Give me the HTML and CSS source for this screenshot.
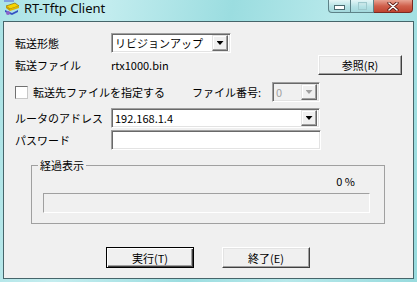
FILE: index.html
```html
<!DOCTYPE html>
<html lang="ja">
<head>
  <meta charset="UTF-8">
  <title>RT-Tftp Client</title>
  <link rel="stylesheet" href="styles.css">
</head>
<body>
  <div class="window">
    <div class="titlebar">
      <svg class="app-icon" width="16" height="17" viewBox="0 0 16 17">
        <rect x="1" y="0" width="10" height="2" fill="#7d9fe0"/>
        <path d="M3 6 L12 3 L16 6 L7 9 Z" fill="#f7d400" stroke="#7a5c00" stroke-width="0.6"/>
        <path d="M3 6 L7 9 L7 11 L3 8 Z" fill="#c69c00"/>
        <path d="M7 9 L16 6 L16 8 L7 11 Z" fill="#e2b600"/>
        <path d="M2 10 L9 13 L15 10 L15 12 L9 15 L2 12 Z" fill="#3552c4"/>
        <circle cx="5" cy="13" r="2" fill="#8a62c8"/>
      </svg>
      <span class="title">RT-Tftp Client</span>
      <div class="caption-btns">
        <span class="cbtn cbtn-min"><i></i></span>
        <span class="cbtn cbtn-max"><i></i></span>
        <span class="cbtn cbtn-close">
          <svg width="12" height="9" viewBox="0 0 12 9">
            <path d="M2 1 L10 8 M10 1 L2 8" stroke="#5a1a14" stroke-width="3.2" stroke-linecap="round"/>
            <path d="M2 1 L10 8 M10 1 L2 8" stroke="#fff" stroke-width="1.6" stroke-linecap="round"/>
          </svg>
        </span>
      </div>
    </div>

    <div class="client">
      <div class="row">
        <span class="label">転送形態</span>
        <div class="combo combo-type">
          <span class="combo-text">リビジョンアップ</span>
          <span class="drop"></span>
        </div>
      </div>

      <div class="row row-file">
        <span class="label">転送ファイル</span>
        <span class="filename">rtx1000.bin</span>
        <button class="btn btn-ref">参照(R)</button>
      </div>

      <div class="row row-check">
        <label class="check"><span class="checkbox"></span>転送先ファイルを指定する</label>
        <span class="fileno-label">ファイル番号:</span>
        <div class="combo combo-fileno disabled">
          <span class="combo-text">0</span>
          <span class="drop"></span>
        </div>
      </div>

      <div class="row row-addr">
        <span class="label">ルータのアドレス</span>
        <div class="combo combo-addr">
          <span class="combo-text">192.168.1.4</span>
          <span class="drop"></span>
        </div>
      </div>

      <div class="row row-pass">
        <span class="label">パスワード</span>
        <div class="edit"></div>
      </div>

      <div class="group">
        <span class="group-title">経過表示</span>
        <div class="pct">0 %</div>
        <div class="progress"></div>
      </div>

      <div class="actions">
        <button class="btn btn-default">実行(T)</button>
        <button class="btn">終了(E)</button>
      </div>
    </div>
  </div>
</body>
</html>
```

FILE: styles.css
```css
body {
  margin: 0;
  font-family: "Noto Sans CJK JP", sans-serif;
  font-size: 11px;
  color: #000;
}
.window {
  width: 417px;
  height: 282px;
  display: flex;
  flex-direction: column;
  background: linear-gradient(100deg, #a9e2e5 0%, #c4edef 22%, #9bdde0 50%, #b6e8ea 72%, #98dbde 100%);
}
.titlebar {
  height: 21px;
  display: flex;
  align-items: flex-start;
  flex: none;
}
.app-icon {
  margin: 0 0 0 3px;
  flex: none;
}
.title {
  margin: 1px 0 0 5px;
  font-family: "Noto Sans", sans-serif;
  font-size: 13px;
  line-height: 15px;
  color: #0a0a0a;
}
.caption-btns {
  margin-left: auto;
  margin-right: 4px;
  display: flex;
}
.cbtn {
  height: 13px;
  box-sizing: border-box;
  display: flex;
  align-items: center;
  justify-content: center;
  border: 1px solid #5d8288;
  border-top: none;
  background: linear-gradient(#e4f6f7, #b5e2e5 55%, #a3d8dc);
}
.cbtn-min {
  width: 23px;
  border-bottom-left-radius: 4px;
}
.cbtn-min i {
  width: 9px;
  height: 3px;
  margin-top: 2px;
  background: #fff;
  border: 1px solid #4a6a70;
}
.cbtn-max {
  width: 23px;
  border-left: none;
}
.cbtn-max i {
  width: 7px;
  height: 6px;
  border: 1px solid #9ec9cd;
  box-shadow: inset 0 2px 0 #c6e6e8;
}
.cbtn-close {
  width: 39px;
  border-left: none;
  border-color: #7a2a22;
  border-bottom-right-radius: 4px;
  background: linear-gradient(#e8a494, #d0604c 50%, #c04430);
}
.client {
  flex: 1;
  margin: 0 3px 3px;
  border: 1px solid #46656a;
  background: #f0f0f0;
  padding: 11px 11px 0 11px;
}
.row {
  display: flex;
  align-items: center;
  height: 20px;
}
.row-file {
  margin-top: 2px;
}
.row-check {
  margin-top: 7px;
}
.row-addr {
  margin-top: 6px;
}
.row-pass {
  margin-top: 2px;
}
.label {
  width: 96px;
  flex: none;
  line-height: 14px;
}
.combo {
  display: flex;
  align-items: center;
  height: 20px;
  box-sizing: border-box;
  background: #fff;
  border: 1px solid;
  border-color: #a0a0a0 #fff #fff #a0a0a0;
  box-shadow: inset 1px 1px #696969, inset -1px -1px #e3e3e3;
  padding: 2px;
  flex: none;
}
.combo-text {
  flex: 1;
  padding-left: 1px;
  line-height: 14px;
  white-space: nowrap;
}
.drop {
  width: 16px;
  height: 16px;
  box-sizing: border-box;
  flex: none;
  display: flex;
  align-items: center;
  justify-content: center;
  background: #f0f0f0;
  border: 1px solid;
  border-color: #e3e3e3 #696969 #696969 #e3e3e3;
  box-shadow: inset -1px -1px #a0a0a0, inset 1px 1px #fff;
}
.drop::after {
  content: "";
  width: 7px;
  height: 4px;
  background: #000;
  clip-path: polygon(0 0, 100% 0, 50% 100%);
}
.combo-type {
  width: 120px;
}
.combo-addr {
  width: 209px;
}
.combo-fileno {
  width: 48px;
}
.combo.disabled {
  background: #f0f0f0;
  color: #a0a0a0;
}
.combo.disabled .drop::after {
  background: #a0a0a0;
}
.filename {
  line-height: 14px;
}
.btn {
  width: 84px;
  height: 20px;
  box-sizing: border-box;
  padding: 0;
  font: inherit;
  line-height: 14px;
  color: #000;
  background: #f0f0f0;
  border: 1px solid;
  border-color: #fff #404040 #404040 #fff;
  box-shadow: inset -1px -1px #a0a0a0, inset 1px 1px #e3e3e3;
}
.btn-ref {
  margin-left: auto;
}
.check {
  width: 177px;
  flex: none;
  display: flex;
  align-items: center;
  line-height: 14px;
}
.checkbox {
  width: 13px;
  height: 13px;
  box-sizing: border-box;
  margin-right: 5px;
  background: #fff;
  border: 1px solid;
  border-color: #707070 #c8c8c8 #c8c8c8 #707070;
}
.fileno-label {
  width: 80px;
  flex: none;
  line-height: 14px;
}
.edit {
  width: 210px;
  height: 20px;
  box-sizing: border-box;
  background: #fff;
  border: 1px solid;
  border-color: #a0a0a0 #fff #fff #a0a0a0;
  box-shadow: inset 1px 1px #696969, inset -1px -1px #e3e3e3;
}
.group {
  position: relative;
  width: 354px;
  height: 59px;
  box-sizing: border-box;
  margin: 15px 0 0 16px;
  padding: 0 14px 0 11px;
  border: 1px solid #a0a0a0;
}
.group-title {
  position: absolute;
  top: -8px;
  left: 6px;
  padding: 0 2px;
  background: #f0f0f0;
  line-height: 14px;
}
.pct {
  text-align: right;
  padding: 8px 15px 0 0;
  height: 14px;
  line-height: 14px;
  margin-bottom: 5px;
}
.progress {
  height: 20px;
  box-sizing: border-box;
  border: 1px solid;
  border-color: #a0a0a0 #fff #fff #a0a0a0;
}
.actions {
  display: flex;
  gap: 28px;
  margin: 23px 0 0 91px;
}
.actions .btn {
  width: 88px;
  height: 21px;
}
.btn-default {
  border-color: #000;
  box-shadow: inset 1px 1px #fff, inset -1px -1px #404040, inset -2px -2px #a0a0a0;
}
```
